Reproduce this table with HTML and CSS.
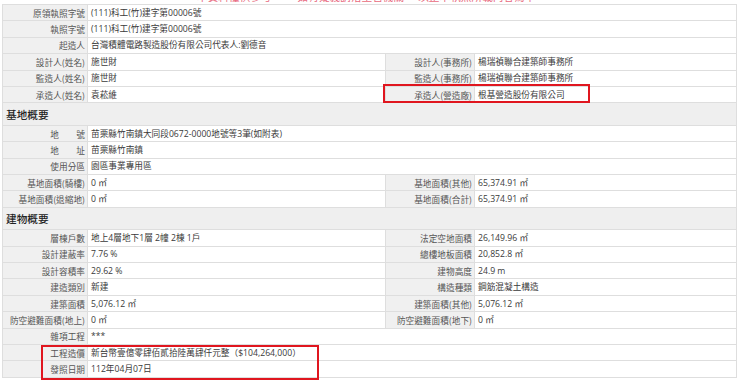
FILE: index.html
```html
<!DOCTYPE html>
<html lang="zh-Hant">
<head>
<meta charset="utf-8">
<title>建造執照資料</title>
<link rel="stylesheet" href="styles.css">
</head>
<body>
<div class="page">
  <div class="notice">
    <span class="n1">本資料僅供參考</span>
    <span class="n2">如有疑義請洽主管機關</span>
    <span class="n3">以正本執照所載內容為準</span>
  </div>

  <div class="sheet">
    <div class="grid">
      <div class="lbl">原領執照字號</div><div class="val wide">(111)科工(竹)建字第00006號</div>
      <div class="lbl">執照字號</div><div class="val wide">(111)科工(竹)建字第00006號</div>
      <div class="lbl">起造人</div><div class="val wide">台灣積體電路製造股份有限公司代表人:劉德音</div>
      <div class="lbl">設計人(姓名)</div><div class="val">施世財</div><div class="lbl">設計人(事務所)</div><div class="val">楊瑞禎聯合建築師事務所</div>
      <div class="lbl">監造人(姓名)</div><div class="val">施世財</div><div class="lbl">監造人(事務所)</div><div class="val">楊瑞禎聯合建築師事務所</div>
      <div class="lbl">承造人(姓名)</div><div class="val">袁菘維</div><div class="lbl">承造人(營造廠)</div><div class="val">根基營造股份有限公司</div>
    </div>

    <h2 class="sec">基地概要</h2>
    <div class="grid">
      <div class="lbl">地　　號</div><div class="val wide">苗栗縣竹南鎮大同段0672-0000地號等3筆(如附表)</div>
      <div class="lbl">地　　址</div><div class="val wide">苗栗縣竹南鎮</div>
      <div class="lbl">使用分區</div><div class="val wide">園區事業專用區</div>
      <div class="lbl">基地面積(騎樓)</div><div class="val">0 ㎡</div><div class="lbl">基地面積(其他)</div><div class="val">65,374.91 ㎡</div>
      <div class="lbl">基地面積(退縮地)</div><div class="val">0 ㎡</div><div class="lbl">基地面積(合計)</div><div class="val">65,374.91 ㎡</div>
    </div>

    <h2 class="sec">建物概要</h2>
    <div class="grid">
      <div class="lbl">層棟戶數</div><div class="val">地上4層地下1層 2幢 2棟 1戶</div><div class="lbl">法定空地面積</div><div class="val">26,149.96 ㎡</div>
      <div class="lbl">設計建蔽率</div><div class="val">7.76 %</div><div class="lbl">總樓地板面積</div><div class="val">20,852.8 ㎡</div>
      <div class="lbl">設計容積率</div><div class="val">29.62 %</div><div class="lbl">建物高度</div><div class="val">24.9 m</div>
      <div class="lbl">建造類別</div><div class="val">新建</div><div class="lbl">構造種類</div><div class="val">鋼筋混凝土構造</div>
      <div class="lbl">建築面積</div><div class="val">5,076.12 ㎡</div><div class="lbl">建築面積(其他)</div><div class="val">5,076.12 ㎡</div>
      <div class="lbl">防空避難面積(地上)</div><div class="val">0 ㎡</div><div class="lbl">防空避難面積(地下)</div><div class="val">0 ㎡</div>
      <div class="lbl">雜項工程</div><div class="val wide">***</div>
      <div class="lbl">工程造價</div><div class="val wide">新台幣壹億零肆佰貳拾陸萬肆仟元整（$104,264,000）</div>
      <div class="lbl">發照日期</div><div class="val wide">112年04月07日</div>
    </div>
  </div>

  <div class="mark mark-contractor"></div>
  <div class="mark mark-cost"></div>
</div>
</body>
</html>
```

FILE: styles.css
```css
html, body {
  margin: 0;
  padding: 0;
  background: #ffffff;
  overflow: hidden;
}

.page {
  position: relative;
  width: 740px;
  height: 381px;
  font-family: "Open Sans", "Noto Sans CJK TC", sans-serif;
  font-size: 8.67px;
  color: #3a3a3a;
}

.notice {
  height: 4px;
  overflow: hidden;
  display: flex;
  color: #e86a80;
  font-family: "Noto Sans CJK TC", sans-serif;
  font-size: 10.67px;
  line-height: 14px;
  white-space: nowrap;
}
.notice span { margin-top: -10.5px; display: block; }
.notice .n1 { margin-left: 197px; }
.notice .n2 { margin-left: 26px; }
.notice .n3 { margin-left: 14px; }

.sheet {
  margin-left: 2px;
  width: 735px;
  border-top: 1px solid #dedede;
  border-left: 1px solid #dedede;
  box-sizing: border-box;
}

.grid {
  display: grid;
  grid-template-columns: 85px 298px 89px 1fr;
  grid-auto-rows: 16.4px;
}

.lbl, .val {
  box-sizing: border-box;
  border-right: 1px solid #dedede;
  border-bottom: 1px solid #dedede;
  display: flex;
  align-items: center;
  white-space: nowrap;
  line-height: 12px;
}

.lbl {
  background: #f0f0f0;
  color: #555555;
  justify-content: flex-end;
  padding-right: 2px;
  font-family: "Noto Sans CJK TC", sans-serif;
}

.val {
  background: #ffffff;
  padding-left: 3px;
}

.val.wide { grid-column: span 3; }

.sec {
  margin: 0;
  height: 22.5px;
  box-sizing: border-box;
  background: #efefef;
  border-right: 1px solid #dedede;
  border-bottom: 1px solid #dedede;
  padding-left: 3px;
  display: flex;
  align-items: center;
  font-family: "Noto Sans CJK TC", sans-serif;
  font-size: 10.67px;
  font-weight: 500;
  color: #222222;
}

.mark {
  position: absolute;
  border: 2px solid #e0161f;
  box-sizing: border-box;
}
.mark-contractor { left: 383px; top: 84px; width: 207px; height: 18.5px; }
.mark-cost { left: 41px; top: 345px; width: 278px; height: 35px; }
```
